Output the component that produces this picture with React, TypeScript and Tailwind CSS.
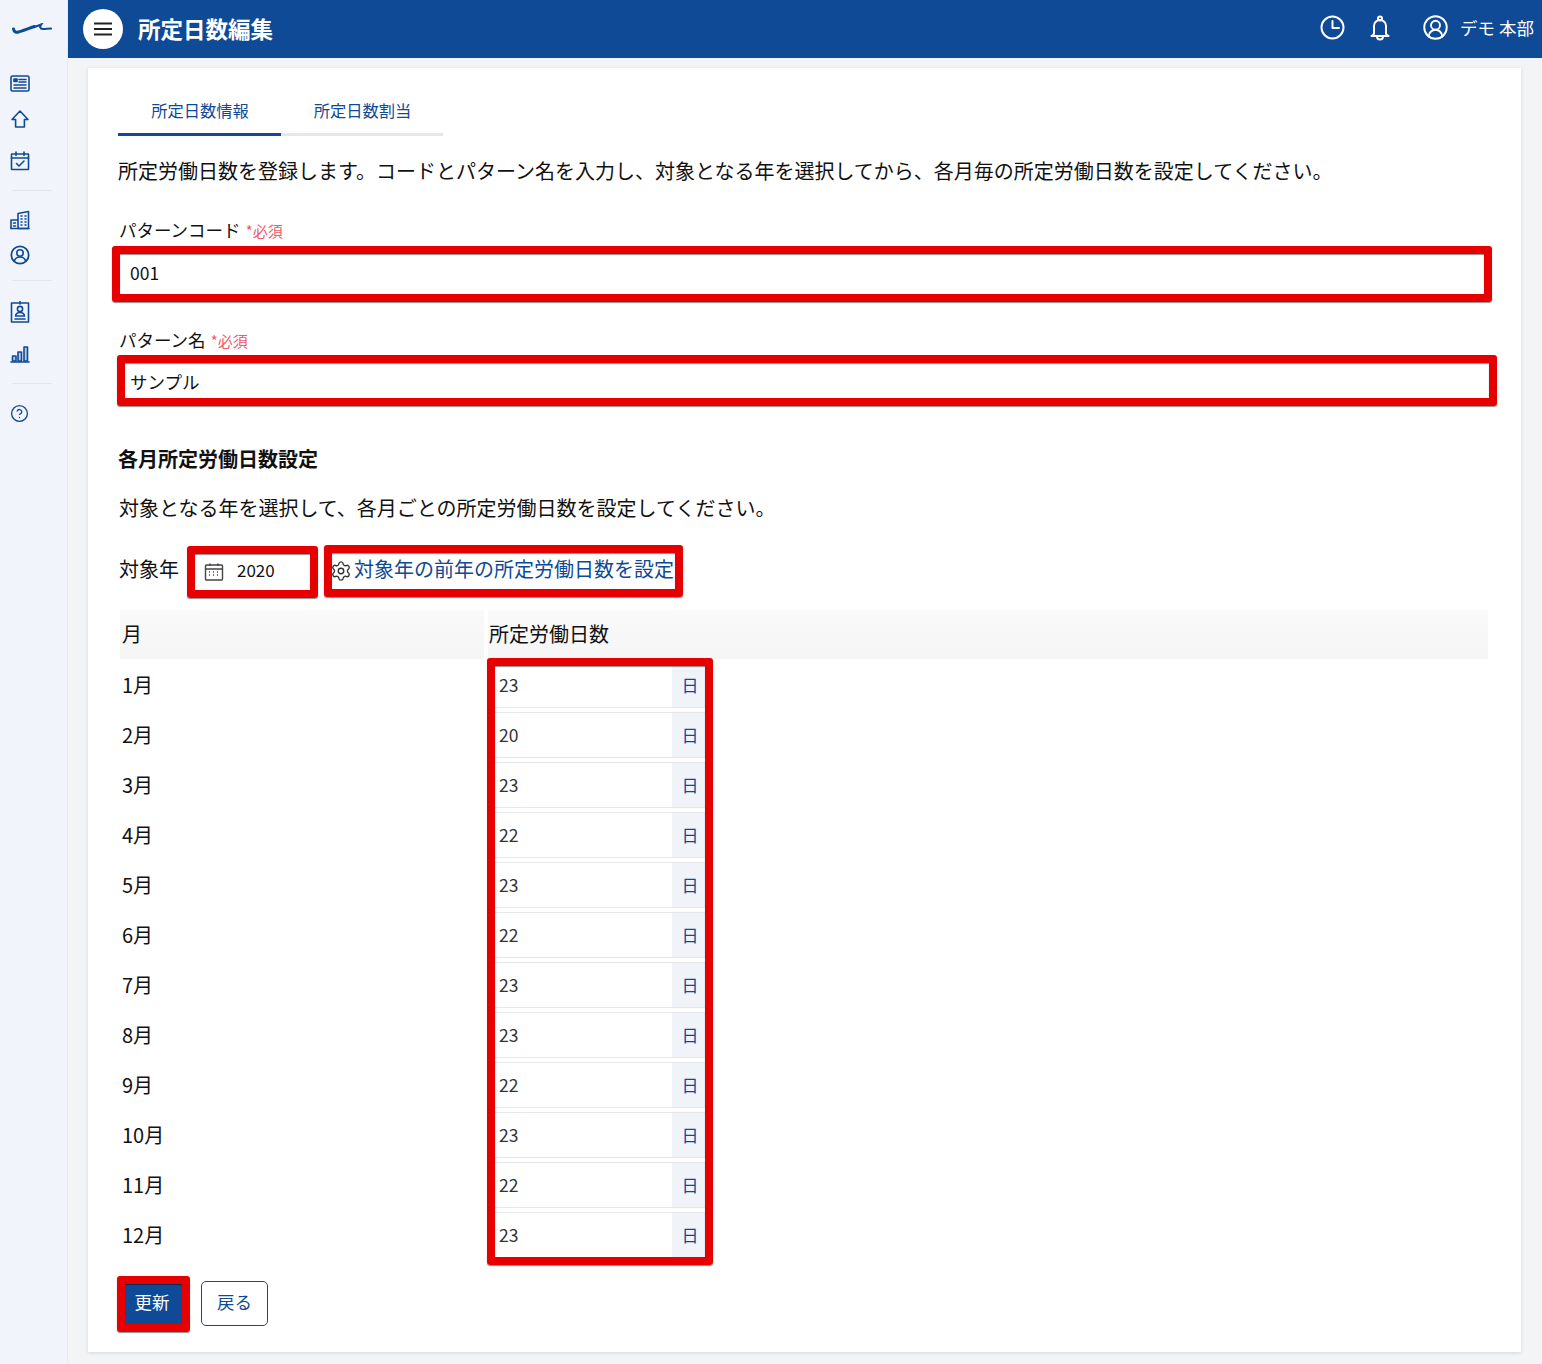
import React from "react";
import { CircleUserRound, CircleHelp, Settings } from "lucide-react";

const FONT = "[font-family:'Noto_Sans_CJK_JP','Noto_Sans',sans-serif]";

const Ico = ({ children, w = 20, h = 20, vb = "0 0 20 20" }: { children: React.ReactNode; w?: number; h?: number; vb?: string }) => (
  <svg width={w} height={h} viewBox={vb} fill="none" stroke="#0f4a96" strokeWidth="1.6" strokeLinejoin="round" strokeLinecap="round">
    {children}
  </svg>
);

const Divider = () => <div className="ml-[12px] w-[40px] h-px bg-[#e3e7ec]" />;

function Sidebar() {
  return (
    <aside className="w-[68px] shrink-0 bg-[#f1f5fb] border-r border-[#e6eaf0] flex flex-col">
      <div className="h-[58px] flex items-center pl-[12px]">
        <svg width="40" height="12" viewBox="0 0 40 12" fill="none" stroke="#0f4a96" strokeLinecap="round">
          <path d="M1.500 6c.5 3 2.500 3.500 5 3s10-3.500 16-5.500" strokeWidth="3" />
          <path d="M22.500 4c2-.7 5-2 6.500-2.500c-1.500 2-1 4.500 2 4.500s5-.5 8-.5" strokeWidth="2.200" />
        </svg>
      </div>
      <div className="flex flex-col items-start pl-[10px] mt-[16px]">
        <Ico>
          <rect x="1" y="2" width="18" height="15" rx="1.500" />
          <rect x="4" y="5" width="3" height="2.500" fill="#0f4a96" />
          <path d="M9 5.500h7M9 8h7M4 11h12M4 14h12" />
        </Ico>
        <div className="mt-[15px]">
          <Ico>
            <path d="M10 2 2 10.500h3.600V18h8.800v-7.500H18Z" />
          </Ico>
        </div>
        <div className="mt-[22px]">
          <Ico>
            <rect x="1.500" y="3" width="17" height="15.500" rx="0.500" />
            <path d="M1.500 7h17M6 1v3.500M14 1v3.500" />
            <path d="m6.500 12.500 2.500 2.500 5-5" />
          </Ico>
        </div>
      </div>
      <div className="mt-[19px]"><Divider /></div>
      <div className="flex flex-col items-start pl-[10px] mt-[19px]">
        <Ico>
          <path d="M1 18.500V10h7M8 18.500V3.500L18.500 1.500v17Z" />
          <path d="M1 18.500h18M3.500 13h2M3.500 16h2M11 6h1M15 6h1M11 9h1M15 9h1M11 12h1M15 12h1M11 15h1M15 15h1" />
        </Ico>
        <div className="mt-[15px]">
          <Ico>
            <circle cx="10" cy="10" r="8.700" strokeWidth="1.800" />
            <circle cx="10" cy="8" r="3.200" />
            <path d="M4.300 16c1-3 3.200-4 5.700-4s4.700 1 5.700 4" />
          </Ico>
        </div>
      </div>
      <div className="mt-[15px]"><Divider /></div>
      <div className="flex flex-col items-start pl-[10px] mt-[20px]">
        <Ico w={20} h={22} vb="0 0 20 22">
          <rect x="1.500" y="2" width="17" height="19" />
          <path d="M10 0.500v2.500" />
          <circle cx="10" cy="8" r="2.600" />
          <path d="M5.500 15c.5-2.500 2-3.500 4.500-3.500s4 1 4.500 3.500ZM5 18h10" />
        </Ico>
        <div className="mt-[22px]">
          <Ico w={20} h={18} vb="0 0 20 18">
            <path d="M1 17h18" />
            <rect x="2.500" y="11" width="3.500" height="5" fill="#0f4a96" fillOpacity="0.25" />
            <rect x="8" y="7" width="3.500" height="9" fill="#0f4a96" fillOpacity="0.25" />
            <rect x="14" y="2" width="3.500" height="14" fill="#0f4a96" fillOpacity="0.25" />
          </Ico>
        </div>
      </div>
      <div className="mt-[20px]"><Divider /></div>
      <div className="mt-[20px] pl-[10px] text-[#0f4a96]">
        <CircleHelp size={19} strokeWidth={1.7} />
      </div>
    </aside>
  );
}

function Header() {
  return (
    <header className="h-[58px] bg-[#0f4a96] flex items-center pl-[15px] pr-[8px] text-white">
      <div className="w-[40px] h-[40px] rounded-full bg-white flex items-center justify-center -mt-px">
        <svg width="18" height="14" viewBox="0 0 18 14" fill="none" stroke="#222" strokeWidth="1.800">
          <path d="M0 1.500h18M0 7h18M0 12.500h18" />
        </svg>
      </div>
      <h1 className="ml-[15px] text-[22.500px] font-bold leading-none -mt-[2px]">所定日数編集</h1>
      <div className="ml-auto flex items-center -mt-[3px]">
        <svg width="27" height="27" viewBox="0 0 27 27" fill="none" stroke="white" strokeWidth="2" strokeLinecap="round" strokeLinejoin="round">
          <circle cx="13.500" cy="13.500" r="11" />
          <path d="M13.500 7v7h6.500" />
        </svg>
        <svg className="ml-[21px]" width="26" height="26" viewBox="0 0 26 26" fill="none" stroke="white" strokeWidth="2" strokeLinecap="round" strokeLinejoin="round">
          <circle cx="13" cy="3.500" r="2" />
          <path d="M7 18.500V11a6 6 0 0 1 12 0v7.500" />
          <path d="M4.500 21h17c-1.500-.8-2.500-1.500-2.500-2.500M7 18.500c0 1-1 1.700-2.500 2.500" />
          <path d="M10 21.500a3 3 0 0 0 6 0" />
        </svg>
        <CircleUserRound size={27} strokeWidth={1.7} className="ml-[29px]" />
        <span className="ml-[11px] text-[17.500px] leading-none whitespace-nowrap">デモ 本部</span>
      </div>
    </header>
  );
}

const Red = ({ className = "" }: { className?: string }) => (
  <div className={`absolute border-[8px] border-[#e60000] rounded-[3px] shadow-[0_1px_1px_rgba(0,0,0,0.45),inset_0_1px_1px_rgba(0,0,0,0.45)] pointer-events-none ${className}`} />
);

const Required = () => <span className="ml-[5px] text-[15px] text-[#ef5a6a]">*必須</span>;

const rows: [string, string][] = [
  ["1月", "23"], ["2月", "20"], ["3月", "23"], ["4月", "22"], ["5月", "23"], ["6月", "22"],
  ["7月", "23"], ["8月", "23"], ["9月", "22"], ["10月", "23"], ["11月", "22"], ["12月", "23"],
];

function DayInput({ value }: { value: string }) {
  return (
    <div className="flex w-[210px] h-[46px] border-y border-[#e5e7eb] items-stretch">
      <div className="flex-1 pl-[4px] flex items-center text-[17.500px] text-[#333]">{value}</div>
      <div className="w-[33px] bg-[#f0f4f9] flex items-center justify-center pl-[3px] text-[17px] text-[#0f4a96]">日</div>
    </div>
  );
}

export default function App() {
  return (
    <div className={`w-[1542px] h-[1364px] flex overflow-hidden bg-[#f3f4f6] text-[#111] ${FONT}`}>
      <Sidebar />
      <div className="flex-1 flex flex-col min-w-0">
        <Header />
        <main className="flex-1 pl-[20px] pr-[21px] pt-[10px]">
          <div className="h-[1284px] bg-white shadow-[0_1px_4px_rgba(0,0,0,0.12)] pl-[30px] pr-[33px]">
            <div className="flex pt-[27px]">
              <div className="w-[163px] h-[41px] border-b-[3px] border-[#0f4a96] flex items-center justify-center pl-px text-[16.300px] text-[#0f4a96] pb-[8px]">所定日数情報</div>
              <div className="w-[162px] h-[41px] border-b-[3px] border-[#e5e7eb] flex items-center justify-center pl-px text-[16.300px] text-[#0f4a96] pb-[8px]">所定日数割当</div>
            </div>

            <p className="mt-[21px] text-[20px] leading-[28px] whitespace-nowrap">所定労働日数を登録します。コードとパターン名を入力し、対象となる年を選択してから、各月毎の所定労働日数を設定してください。</p>

            <div className="mt-[33px] h-[24px] flex items-center pl-px text-[17.500px] leading-none">パターンコード<Required /></div>
            <div className="relative mt-[13px] h-[40px] w-[1364px] flex items-center pl-[12px] pb-[4px] text-[17.500px]">
              001
              <Red className="-left-[6px] -right-[10px] top-[-9px] bottom-[-7px]" />
            </div>

            <div className="mt-[33px] h-[24px] flex items-center pl-px text-[17.500px] leading-none">パターン名<Required /></div>
            <div className="relative mt-[11px] h-[35px] w-[1364px] flex items-center pl-[12px] pt-[3px] text-[17.500px]">
              サンプル
              <Red className="-left-px -right-[15px] top-[-8px] bottom-[-8px]" />
            </div>

            <h2 className="mt-[47px] text-[20px] font-bold leading-[28px]">各月所定労働日数設定</h2>
            <p className="mt-[21px] ml-px text-[20px] leading-[28px]">対象となる年を選択して、各月ごとの所定労働日数を設定してください。</p>

            <div className="mt-[24px] ml-px h-[52px] flex items-center">
              <span className="text-[20px] leading-none -mt-[6px]">対象年</span>
              <div className="relative ml-[8px] w-[131px] h-full flex items-center pl-[17px]">
                <svg width="20" height="20" viewBox="0 0 20 20" fill="none" stroke="#444" strokeWidth="1.400">
                  <rect x="1.500" y="3" width="17" height="15" rx="1" />
                  <path d="M1.500 7h17M6 1.500V4M14 1.500V4" />
                  <path d="M5 10h2M9 10h2M13 10h2M5 13h2M9 13h2M13 13h2" strokeDasharray="1 1" />
                </svg>
                <span className="ml-[13px] text-[17px] text-[#111] -mt-[4px]">2020</span>
                <Red className="inset-0" />
              </div>
              <div className="relative ml-[6px] w-[359px] h-full flex items-center pl-[6px] pb-[2px] text-[#0f4a96]">
                <Settings size={22} strokeWidth={1.500} className="text-[#333] shrink-0" />
                <span className="ml-[2px] text-[20px] whitespace-nowrap leading-none -mt-[4px]">対象年の前年の所定労働日数を設定</span>
                <Red className="top-[-1px] bottom-[1px] left-0 right-0" />
              </div>
            </div>

            <div className="mt-[12px] ml-[2px] w-[1368px] text-[20px]">
              <div className="flex h-[49px] gap-[4px] leading-none">
                <div className="w-[364px] bg-[linear-gradient(#fbfafa,#f5f5f5)] flex items-center pl-[2px] pb-[2px]">月</div>
                <div className="flex-1 bg-[linear-gradient(#fbfafa,#f5f5f5)] flex items-center pl-px pb-[2px]">所定労働日数</div>
              </div>
              <div className="relative mt-px">
                {rows.map(([m, v]) => (
                  <div key={m} className="flex h-[50px] items-center">
                    <div className="w-[375px] pl-[2px]">{m}</div>
                    <DayInput value={v} />
                  </div>
                ))}
                <Red className="left-[367px] w-[226px] top-[-2px] bottom-[-5px]" />
              </div>
            </div>

            <div className="mt-[16px] -ml-px flex items-center">
              <div className="relative w-[73px] h-[56px] flex items-center justify-center">
                <div className="w-[58px] h-[40px] bg-[#0f4a96] flex items-center justify-center pr-[3px] pb-[4px] text-white text-[17.500px]">更新</div>
                <Red className="inset-0" />
              </div>
              <button className="ml-[11px] mb-[2px] w-[67px] h-[45px] rounded-[5px] border border-[#0f4a96] bg-white text-[#0f4a96] pb-[2px] text-[17.500px]">戻る</button>
            </div>
          </div>
        </main>
      </div>
    </div>
  );
}
